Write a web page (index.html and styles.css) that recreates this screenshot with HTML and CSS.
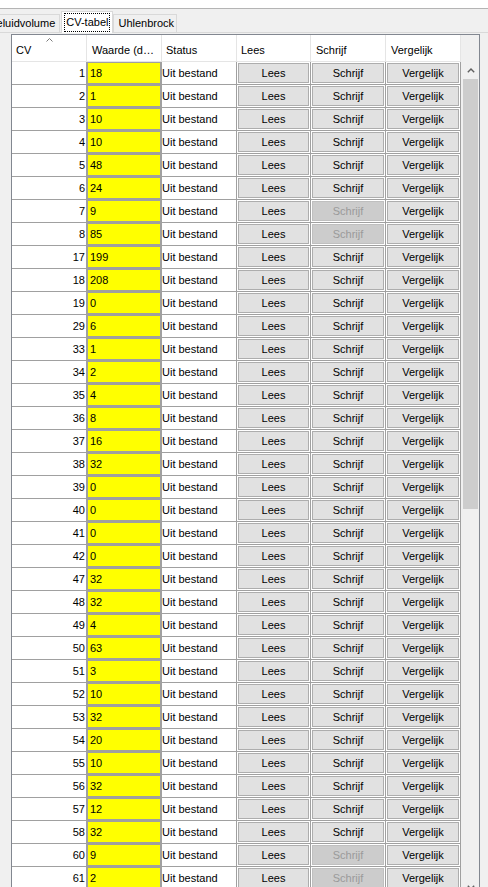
FILE: index.html
```html
<!DOCTYPE html>
<html lang="nl">
<head>
  <meta charset="UTF-8" />
  <title>Decoder – CV-tabel</title>
  <link rel="stylesheet" href="styles.css">
</head>
<body>

  <!-- ========== TABS ========== -->
  <div class="titlegap"></div>
  <div class="tabstrip">
    <div class="tab">Geluidvolume</div>
    <div class="tab active"><span class="focus">CV-tabel</span></div>
    <div class="tab last">Uhlenbrock</div>
  </div>

  <!-- ========== CV GRID ========== -->
  <div class="tabpage">
    <div class="gridview">
      <div class="cells" id="cells">
        <div class="row head">
          <div class="hcell">CV<svg class="sort" width="7" height="4" viewBox="0 0 7 4"><polyline points="0.5,3.5 3.5,0.5 6.5,3.5" fill="none" stroke="#7a7a7a" /></svg></div>
          <div class="hcell">Waarde (d…</div>
          <div class="hcell">Status</div>
          <div class="hcell">Lees</div>
          <div class="hcell">Schrijf</div>
          <div class="hcell">Vergelijk</div>
        </div>
      </div>

      <!-- vertical scrollbar -->
      <div class="vscroll">
        <div class="sb-corner"></div>
        <div class="sb-btn"><svg width="8" height="5" viewBox="0 0 8 5"><polyline points="0.8,4.2 4,1 7.2,4.2" fill="none" stroke="#606060" stroke-width="1.4" /></svg></div>
        <div class="sb-thumb"></div>
        <div class="sb-track"></div>
        <div class="sb-btn"><svg width="8" height="5" viewBox="0 0 8 5"><polyline points="0.8,0.8 4,4 7.2,0.8" fill="none" stroke="#606060" stroke-width="1.4" /></svg></div>
      </div>
    </div>
  </div>

<script>
  // [cv, waarde, schrijf uitgeschakeld]
  const rows = [
    [1, 18], [2, 1], [3, 10], [4, 10], [5, 48], [6, 24], [7, 9, true], [8, 85, true],
    [17, 199], [18, 208], [19, 0], [29, 6], [33, 1], [34, 2], [35, 4], [36, 8],
    [37, 16], [38, 32], [39, 0], [40, 0], [41, 0], [42, 0], [47, 32], [48, 32],
    [49, 4], [50, 63], [51, 3], [52, 10], [53, 32], [54, 20], [55, 10], [56, 32],
    [57, 12], [58, 32], [60, 9, true], [61, 2, true]
  ];

  const cells = document.getElementById('cells');
  rows.forEach(([cv, val, locked]) => {
    cells.insertAdjacentHTML('beforeend', `
      <div class="row">
        <div class="cell cv">${cv}</div>
        <div class="cell val"><div class="box">${val}</div></div>
        <div class="cell status">Uit bestand</div>
        <div class="cell act"><button>Lees</button></div>
        <div class="cell act"><button${locked ? ' disabled' : ''}>Schrijf</button></div>
        <div class="cell act"><button>Vergelijk</button></div>
      </div>`);
  });
</script>
</body>
</html>
```

FILE: styles.css
```css
html, body { margin: 0; height: 887px; overflow: hidden; }
body {
  background: #f0f0f0;
  font-family: 'Liberation Sans', Arial, sans-serif;
  font-size: 11px;
  color: #000;
}

/* ---------- TABS ---------- */
.titlegap { height: 8px; background: #fff; border-bottom: 1px solid #b4b4b4; }
.tabstrip { display: flex; align-items: flex-end; height: 23px; margin-left: -17px; border-bottom: 1px solid #d9d9d9; }
.tab { height: 18px; box-sizing: border-box; padding: 0 4px; line-height: 17px; border: 1px solid #d9d9d9; border-bottom: none; background: #f0f0f0; white-space: nowrap; }
.tab.last { padding: 0 2px 0 4px; }
.tab.active { height: 22px; margin: 0 0 -1px 1px; padding: 2px 3px 0; background: #fff; }
.tab .focus { display: inline-block; line-height: 17px; padding: 0 1px; outline: 1px dotted #000; }

/* ---------- GRID ---------- */
.tabpage { padding: 1px 0 0 11px; }
.gridview { display: flex; width: 469px; height: 863px; box-sizing: border-box; border: 1px solid #828790; }
.cells { width: 450px; background: #f0f0f0; }

.row { display: grid; grid-template-columns: 75px 75px 75px 74px 75px 75px; height: 23px; width: 449px; }
.row.head { height: 27px; }

.hcell { position: relative; background: #fff; padding: 4px 0 0 4px; line-height: 22px; border-right: 1px solid #e5e5e5; border-bottom: 1px solid #e5e5e5; white-space: nowrap; overflow: hidden; }
.hcell:nth-child(2), .hcell:nth-child(5), .hcell:nth-child(6) { padding-left: 5px; }
.hcell .sort { position: absolute; top: 3px; left: 34px; }

.cell { background: #fff; box-sizing: border-box; border-right: 1px solid #a0a0a0; border-bottom: 1px solid #a0a0a0; line-height: 22px; white-space: nowrap; overflow: hidden; }
.cell.cv { text-align: right; padding-right: 1px; }
.cell.val .box { height: 22px; box-sizing: border-box; border: 1px solid #a0a0a0; background: #ff0; padding-left: 2px; line-height: 20px; }
.cell.act { padding: 1px; }
.cell.act button {
  display: block; width: 100%; height: 20px; margin: 0; padding: 0;
  font: inherit; line-height: 18px; color: #000; background: #e1e1e1;
  border: 1px solid #adadad; box-sizing: border-box;
}
.cell.act button:disabled { background: #cccccc; border-color: #bfbfbf; color: #9a9a9a; }

/* ---------- SCROLLBAR ---------- */
.vscroll { width: 17px; display: flex; flex-direction: column; background: #f0f0f0; }
.sb-corner { height: 27px; }
.sb-btn { height: 17px; display: flex; align-items: center; justify-content: center; }
.sb-thumb { height: 430px; margin: 0 1px; background: #cdcdcd; }
.sb-track { flex: 1; }
```
